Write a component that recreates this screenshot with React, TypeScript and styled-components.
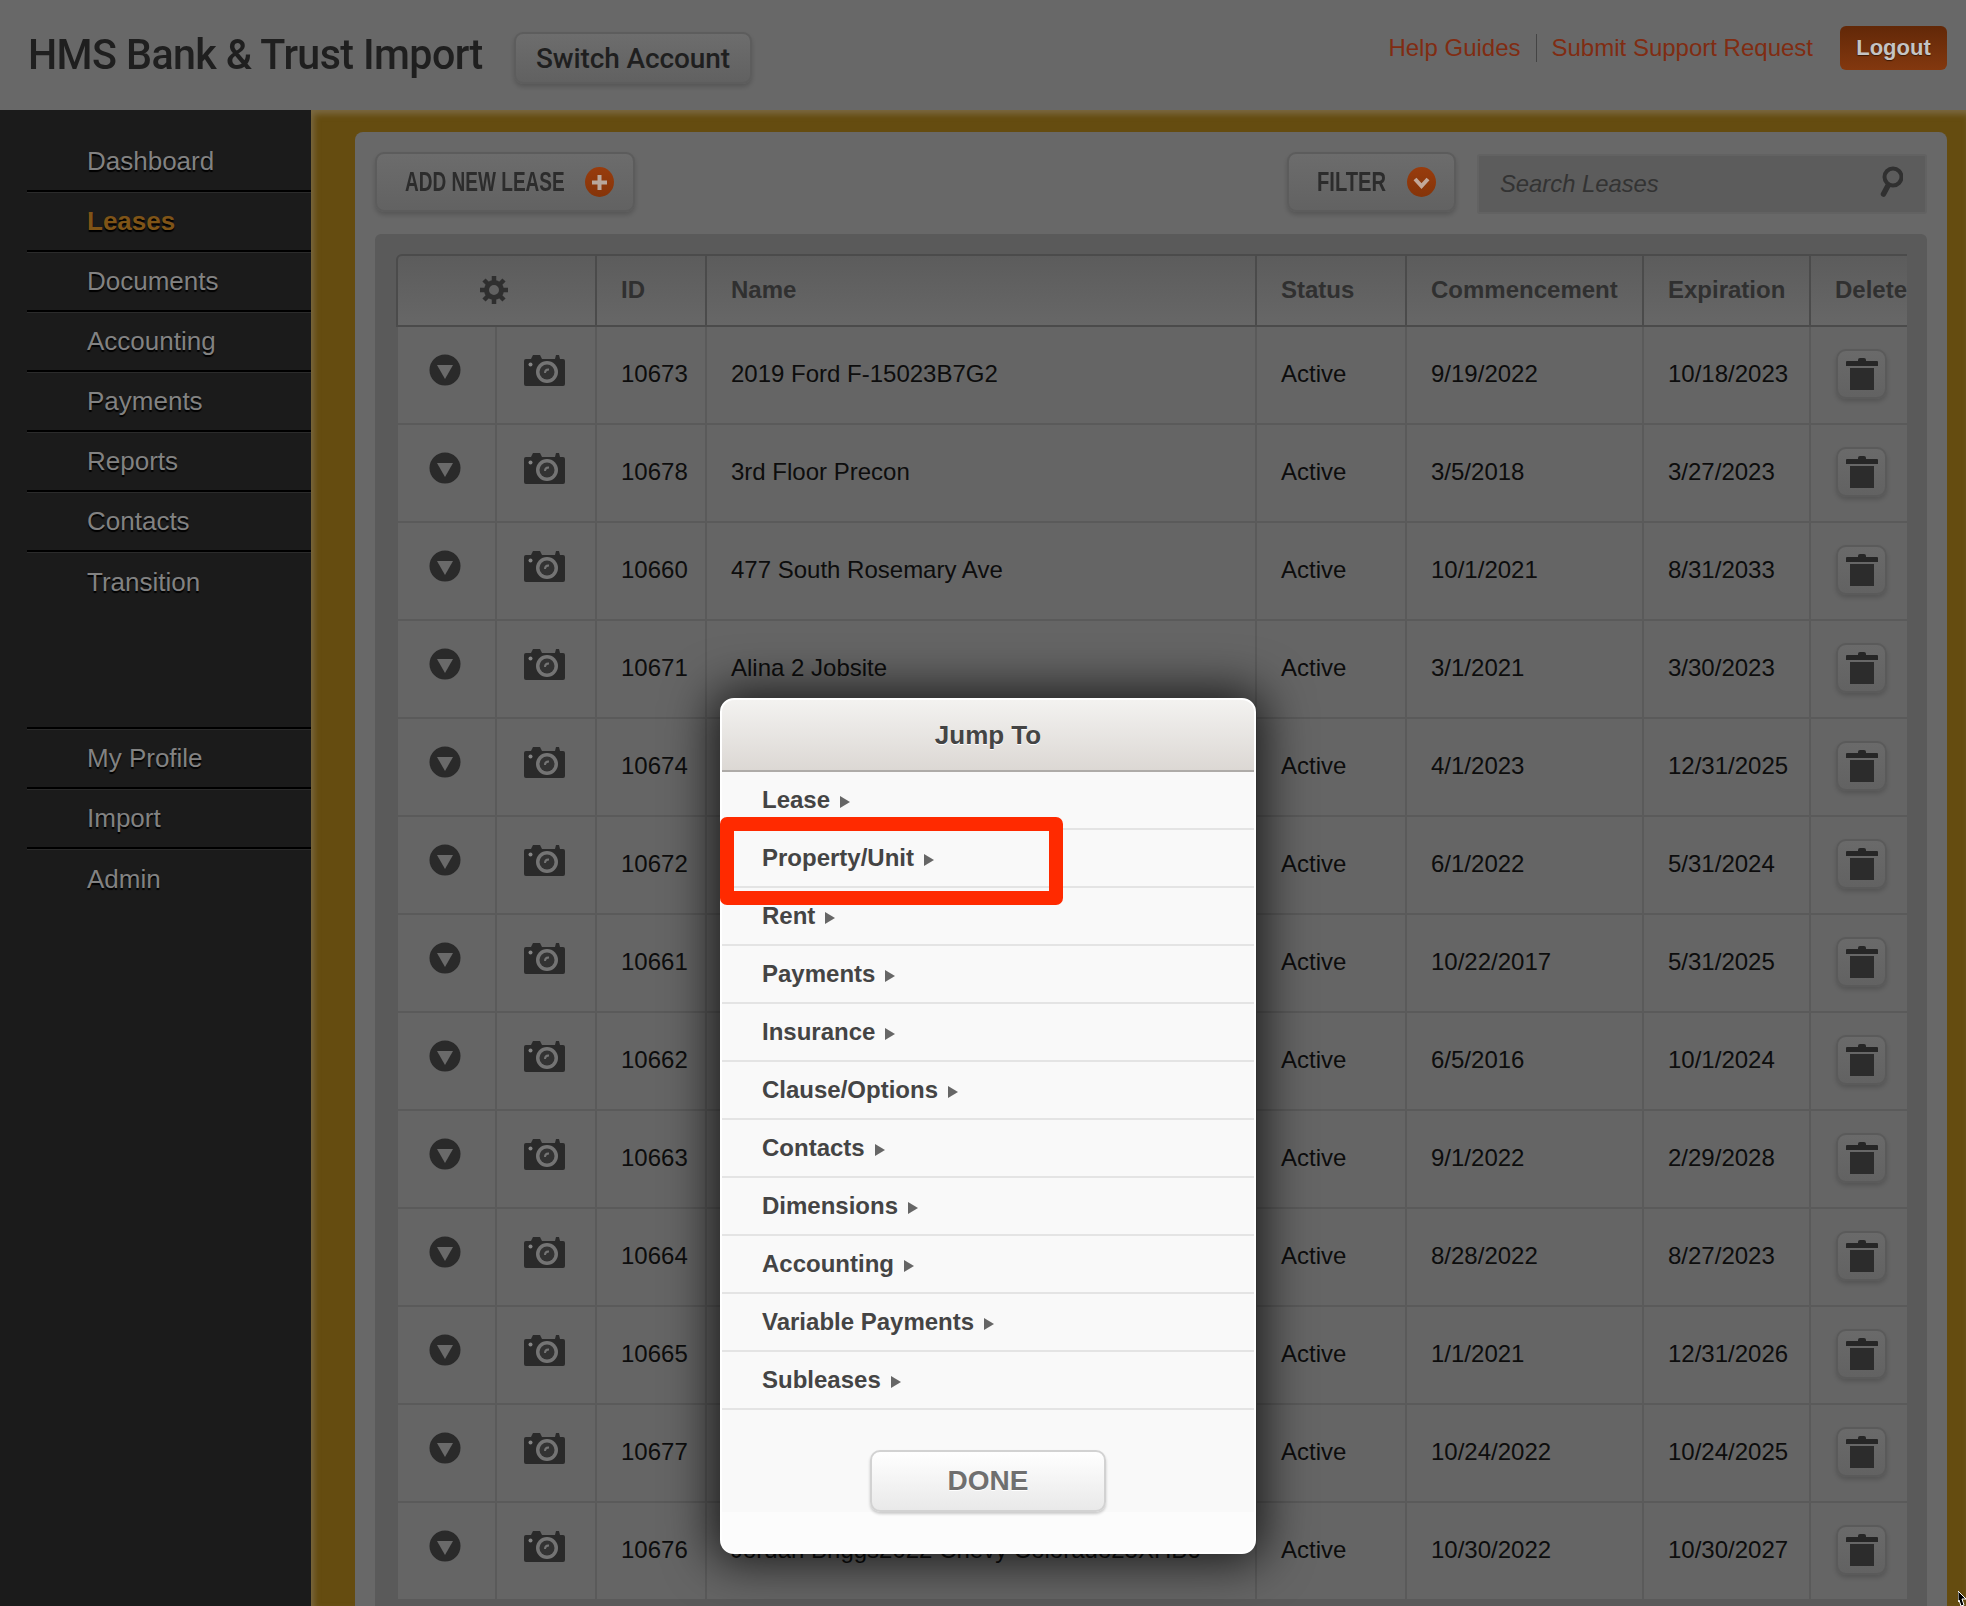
import React from 'react';
import styled, { createGlobalStyle } from 'styled-components';

const GlobalStyle = createGlobalStyle`
    html, body {
        margin: 0;
        padding: 0;
        background: #6a6a6a;
        font-family: "Liberation Sans", Arial, sans-serif;
    }
    * {
        box-sizing: border-box;
    }
`;

const Page = styled.div`
    position: relative;
    width: 1966px;
    height: 1606px;
    overflow: hidden;
    display: flex;
    flex-direction: column;
`;

const Header = styled.header`
    flex: 0 0 110px;
    display: flex;
    align-items: flex-start;
    background: #686868;
    padding-left: 28px;
    padding-right: 19px;
`;
const Title = styled.h1`
    margin: 25px 0 0;
    width: 486px;
    font-family: "Roboto", sans-serif;
    font-size: 42px;
    line-height: 60px;
    font-weight: 500;
    color: #1f1f1f;
    white-space: nowrap;
    letter-spacing: -0.6px;
    transform: scaleX(0.98);
    transform-origin: left center;
`;
const SwitchButton = styled.button`
    margin-top: 32px;
    width: 238px;
    height: 52px;
    padding: 0;
    border: 2px solid #5d5d5d;
    border-radius: 9px;
    background: linear-gradient(#6d6d6d, #616161);
    box-shadow: 0 3px 4px rgba(0, 0, 0, 0.16);
    font-family: "Roboto", sans-serif;
    font-size: 28px;
    font-weight: 500;
    letter-spacing: -0.1px;
    color: #1f1f1f;
`;
const HeaderRight = styled.div`
    margin-left: auto;
    margin-top: 26px;
    display: flex;
    align-items: flex-start;
`;
const HelpLink = styled.a`
    font-size: 24px;
    line-height: 44px;
    color: #802c12;
    white-space: nowrap;
`;
const LinkDivider = styled.span`
    width: 1px;
    height: 28px;
    margin: 8px 15px 0 15px;
    background: #444444;
`;
const LogoutButton = styled.button`
    width: 107px;
    height: 44px;
    margin-left: 27px;
    padding: 0;
    border: 0;
    border-radius: 6px;
    background: linear-gradient(#622808, #83380f);
    font-family: "Liberation Sans", Arial, sans-serif;
    font-size: 22px;
    font-weight: bold;
    color: #c4c4c4;
    text-shadow: 0 1px 1px #3c1804;
`;

const Body = styled.div`
    flex: 1;
    min-height: 0;
    display: flex;
`;

const Sidebar = styled.nav`
    flex: 0 0 311px;
    background: #1b1b1b;
    padding: 22px 0 0 27px;
`;
const NavGroup = styled.div<{ $lined?: boolean }>`
    margin-top: ${(props) => (props.$lined ? '115px' : '0')};
    border-top: ${(props) => (props.$lined ? '2px solid #000000' : 'none')};
    box-shadow: ${(props) => (props.$lined ? 'inset 0 1px 0 #2b2b2b' : 'none')};
`;
const NavItem = styled.div<{ $active?: boolean; $last?: boolean }>`
    height: 60px;
    padding-left: 60px;
    display: flex;
    align-items: center;
    font-size: 26px;
    font-weight: ${(props) => (props.$active ? 'bold' : 'normal')};
    color: ${(props) => (props.$active ? '#7f5417' : '#828282')};
    text-shadow: 0 2px 1px #000000;
    border-bottom: ${(props) => (props.$last ? 'none' : '2px solid #000000')};
    box-shadow: ${(props) => (props.$last ? 'none' : '0 1px 0 #2b2b2b')};
`;

const Main = styled.main`
    flex: 1;
    min-width: 0;
    background: #654c10;
    box-shadow: inset 3px 4px 6px rgba(140, 130, 110, 0.55);
    padding: 22px 19px 0 44px;
`;
const Panel = styled.section`
    height: 100%;
    background: #686868;
    border-radius: 8px 8px 0 0;
    padding: 20px 20px 0 20px;
`;
const Toolbar = styled.div`
    display: flex;
    align-items: flex-start;
    justify-content: space-between;
    height: 60px;
    margin-bottom: 22px;
`;
const ToolGroup = styled.div`
    display: flex;
    align-items: flex-start;
`;
const ToolButton = styled.button<{ $width: number; $gap: number }>`
    width: ${(props) => props.$width}px;
    height: 60px;
    padding: 0 0 0 28px;
    border: 2px solid #5c5c5c;
    border-radius: 9px;
    background: linear-gradient(#6c6c6c, #626262);
    box-shadow: 0 3px 4px rgba(0, 0, 0, 0.16);
    display: flex;
    align-items: center;
    gap: ${(props) => props.$gap}px;
`;
const ToolLabel = styled.span<{ $width: number; $squeeze: number }>`
    display: inline-block;
    width: ${(props) => props.$width}px;
    font-family: "Liberation Sans", sans-serif;
    font-size: 28px;
    font-weight: bold;
    text-align: left;
    white-space: nowrap;
    color: #2c2c2c;
    transform: scaleX(${(props) => props.$squeeze});
    transform-origin: left center;
`;
const OrangeDot = styled.span`
    width: 29px;
    height: 30px;
    border-radius: 50%;
    background: linear-gradient(#983c0d, #853409);
    display: flex;
    align-items: center;
    justify-content: center;
    flex-shrink: 0;
`;
const SearchBox = styled.div`
    margin-left: 21px;
    margin-top: 2px;
    width: 450px;
    height: 60px;
    background: #5c5c5c;
    border: 2px solid #626262;
    border-radius: 3px;
    display: flex;
    align-items: center;
    justify-content: space-between;
    padding: 0 22px 0 21px;
`;
const SearchPlaceholder = styled.span`
    font-size: 23.8px;
    font-style: italic;
    color: #333333;
`;
const SearchGlass = styled.svg`
    margin-bottom: 4px;
    filter: blur(0.5px);
`;

const TableWell = styled.div`
    height: 100%;
    background: #5a5a5a;
    border-radius: 6px 6px 0 0;
    padding: 20px 20px 0 21px;
`;
const TableClip = styled.div`
    width: 1511px;
    overflow: hidden;
`;
const LeaseTable = styled.table`
    width: 1537px;
    table-layout: fixed;
    border-collapse: separate;
    border-spacing: 0;
`;
const HeadCell = styled.th<{ $first?: boolean; $center?: boolean }>`
    height: 73px;
    padding: 0 0 2px ${(props) => (props.$center ? '0' : '24px')};
    text-align: ${(props) => (props.$center ? 'center' : 'left')};
    font-size: 24px;
    font-weight: bold;
    color: #303030;
    white-space: nowrap;
    background: linear-gradient(#5c5c5c, #676767);
    border-top: 2px solid #4b4b4b;
    border-bottom: 2px solid #4b4b4b;
    border-right: 2px solid #4b4b4b;
    border-left: ${(props) => (props.$first ? '2px solid #4b4b4b' : 'none')};
    border-top-left-radius: ${(props) => (props.$first ? '6px' : '0')};
`;
const Gear = styled.svg`
    display: inline-block;
    vertical-align: middle;
    margin-right: 5px;
    filter: blur(0.5px);
`;
const Cell = styled.td<{ $first?: boolean; $center?: boolean }>`
    height: 98px;
    padding: 0 0 2px ${(props) => (props.$center ? '0' : '24px')};
    text-align: ${(props) => (props.$center ? 'center' : 'left')};
    font-size: 24px;
    color: #0d0d0d;
    white-space: nowrap;
    background: #656565;
    border-bottom: 2px solid #5a5a5a;
    border-right: 2px solid #5a5a5a;
    border-left: ${(props) => (props.$first ? '2px solid #5a5a5a' : 'none')};
`;
const IconWrap = styled.div`
    display: flex;
    justify-content: center;
    align-items: center;
    margin-top: -8px;
    padding-right: 4px;
`;
const DeleteCell = styled(Cell)`
    padding: 0 0 2px 0;
`;
const DeleteButton = styled.div`
    width: 51px;
    height: 50px;
    margin-left: 25px;
    border: 2px solid #5a5a5a;
    border-radius: 10px;
    background: linear-gradient(#6a6a6a, #626262);
    box-shadow: 0 3px 4px rgba(0, 0, 0, 0.15);
    display: flex;
    align-items: center;
    justify-content: center;
`;

const Modal = styled.div`
    position: absolute;
    left: 720px;
    top: 698px;
    width: 536px;
    height: 856px;
    background: #fcfcfc;
    border: 2px solid #ffffff;
    border-radius: 14px;
    box-shadow: 0 0 48px 8px rgba(0, 0, 0, 0.74);
    display: flex;
    flex-direction: column;
`;
const ModalHeader = styled.div`
    flex: 0 0 72px;
    border-radius: 12px 12px 0 0;
    background: linear-gradient(#f3f2f0, #dcd8d4);
    border-bottom: 2px solid #aeaba8;
    display: flex;
    align-items: center;
    justify-content: center;
    font-size: 26px;
    font-weight: bold;
    color: #444444;
    text-shadow: 0 1px 0 #ffffff;
`;
const ModalList = styled.div`
    background: #f9f9f9;
`;
const ModalRow = styled.div`
    height: 58px;
    border-bottom: 2px solid #e4e4e4;
    padding: 0 0 1px 40px;
    display: flex;
    align-items: center;
    font-size: 24px;
    font-weight: bold;
    color: #444444;
`;
const RowArrow = styled.span`
    width: 0;
    height: 0;
    margin: 4px 0 0 10px;
    border-left: 10px solid #666666;
    border-top: 6.5px solid transparent;
    border-bottom: 6.5px solid transparent;
`;
const ModalFooter = styled.div`
    flex: 1;
    display: flex;
    justify-content: center;
    padding-top: 40px;
    background: linear-gradient(#f9f9f9 102px, #fcfcfc 102px);
    border-radius: 0 0 12px 12px;
`;
const DoneButton = styled.button`
    width: 236px;
    height: 62px;
    padding: 0;
    border: 2px solid #d2d2d2;
    border-radius: 10px;
    background: linear-gradient(#ffffff, #e9e9e9);
    box-shadow: 0 2px 3px rgba(0, 0, 0, 0.2);
    font-family: "Liberation Sans", Arial, sans-serif;
    font-size: 28px;
    font-weight: bold;
    color: #6f6f6f;
    text-shadow: 0 1px 0 #ffffff;
`;

// red box somebody drew on the screenshot
const Callout = styled.div`
    position: absolute;
    left: 720px;
    top: 817px;
    width: 343px;
    height: 88px;
    border: 14px solid #ff2a00;
    border-radius: 7px;
    pointer-events: none;
`;
const Cursor = styled.svg`
    position: absolute;
    left: 1958px;
    top: 1591px;
`;

function TriangleIcon() {
    return (
        <svg width="32" height="32" viewBox="0 0 32 32">
            <circle cx="16" cy="16" r="15.5" fill="#2a2a2a" />
            <path d="M8 11 H24 L16 25 Z" fill="#6a6a6a" />
        </svg>
    );
}

function CameraIcon() {
    return (
        <svg width="41" height="32" viewBox="0 0 41 32">
            <path
                d="M2 5 H7 L9 1 H16 L18 5 H31 L32 1 H35 L36 5 H39 Q41 5 41 7 V30 Q41 32 39 32 H2 Q0 32 0 30 V7 Q0 5 2 5 Z"
                fill="#2a2a2a"
            />
            <circle cx="23" cy="18" r="11" fill="#747474" />
            <circle cx="23" cy="18" r="7.5" fill="#333333" />
            <path d="M20 19 Q20 14 25 14.5 L25 16.5 Q22 16.5 22 19 Z" fill="#747474" />
            <circle cx="6.5" cy="10.5" r="2" fill="#858585" />
        </svg>
    );
}

function TrashIcon() {
    return (
        <svg width="32" height="34" viewBox="0 0 32 34">
            <path d="M12 3 Q12 1 14 1 H18 Q20 1 20 3 V4 H31 Q32 4 32 5 V9 H0 V5 Q0 4 1 4 H12 Z" fill="#262626" />
            <path d="M4 11 H28 V33 H4 Z" fill="#2c2c2c" />
        </svg>
    );
}

function GearIcon() {
    return (
        <Gear width="30" height="30" viewBox="0 0 30 30">
            <g stroke="#2f2f2f" strokeWidth="4.5">
                <path d="M15 1 V29 M1 15 H29 M5 5 L25 25 M25 5 L5 25" />
            </g>
            <circle cx="15" cy="15" r="7.5" fill="#616161" stroke="#2f2f2f" strokeWidth="5" />
        </Gear>
    );
}

function SearchIcon() {
    return (
        <SearchGlass width="24" height="32" viewBox="0 0 24 32">
            <circle cx="14" cy="11" r="8.5" fill="#5c5c5c" stroke="#303030" strokeWidth="4" />
            <path d="M8.5 20.5 L4.5 28" stroke="#303030" strokeWidth="5.5" strokeLinecap="round" />
        </SearchGlass>
    );
}

const leases = [
    { id: '10673', name: '2019 Ford F-15023B7G2', start: '9/19/2022', end: '10/18/2023' },
    { id: '10678', name: '3rd Floor Precon', start: '3/5/2018', end: '3/27/2023' },
    { id: '10660', name: '477 South Rosemary Ave', start: '10/1/2021', end: '8/31/2033' },
    { id: '10671', name: 'Alina 2 Jobsite', start: '3/1/2021', end: '3/30/2023' },
    { id: '10674', name: '', start: '4/1/2023', end: '12/31/2025' },
    { id: '10672', name: '', start: '6/1/2022', end: '5/31/2024' },
    { id: '10661', name: '', start: '10/22/2017', end: '5/31/2025' },
    { id: '10662', name: '', start: '6/5/2016', end: '10/1/2024' },
    { id: '10663', name: '', start: '9/1/2022', end: '2/29/2028' },
    { id: '10664', name: '', start: '8/28/2022', end: '8/27/2023' },
    { id: '10665', name: '', start: '1/1/2021', end: '12/31/2026' },
    { id: '10677', name: '', start: '10/24/2022', end: '10/24/2025' },
    { id: '10676', name: 'Jordan Briggs2022 Chevy Colorado23XHB6', start: '10/30/2022', end: '10/30/2027' },
];

const columns = [101, 100, 110, 550, 150, 237, 167, 122];
const jumpLinks = [
    'Lease',
    'Property/Unit',
    'Rent',
    'Payments',
    'Insurance',
    'Clause/Options',
    'Contacts',
    'Dimensions',
    'Accounting',
    'Variable Payments',
    'Subleases',
];

function App() {
    return (
        <Page>
            <GlobalStyle />
            <Header>
                <Title>HMS Bank &amp; Trust Import</Title>
                <SwitchButton>Switch Account</SwitchButton>
                <HeaderRight>
                    <HelpLink>Help Guides</HelpLink>
                    <LinkDivider />
                    <HelpLink>Submit Support Request</HelpLink>
                    <LogoutButton>Logout</LogoutButton>
                </HeaderRight>
            </Header>
            <Body>
                <Sidebar>
                    <NavGroup>
                        <NavItem>Dashboard</NavItem>
                        <NavItem $active>Leases</NavItem>
                        <NavItem>Documents</NavItem>
                        <NavItem>Accounting</NavItem>
                        <NavItem>Payments</NavItem>
                        <NavItem>Reports</NavItem>
                        <NavItem>Contacts</NavItem>
                        <NavItem $last>Transition</NavItem>
                    </NavGroup>
                    <NavGroup $lined>
                        <NavItem>My Profile</NavItem>
                        <NavItem>Import</NavItem>
                        <NavItem $last>Admin</NavItem>
                    </NavGroup>
                </Sidebar>
                <Main>
                    <Panel>
                        <Toolbar>
                            <ToolButton $width={260} $gap={22}>
                                <ToolLabel $width={158} $squeeze={0.68}>ADD NEW LEASE</ToolLabel>
                                <OrangeDot>
                                    <svg width="17" height="17" viewBox="0 0 17 17">
                                        <path d="M6.5 1 H10.5 V6.5 H16 V10.5 H10.5 V16 H6.5 V10.5 H1 V6.5 H6.5 Z" fill="#b8a79c" />
                                    </svg>
                                </OrangeDot>
                            </ToolButton>
                            <ToolGroup>
                                <ToolButton $width={169} $gap={21}>
                                    <ToolLabel $width={69} $squeeze={0.72}>FILTER</ToolLabel>
                                    <OrangeDot>
                                        <svg width="17" height="15" viewBox="0 0 17 15">
                                            <path d="M2 4 L8.5 11 L15 4" fill="none" stroke="#c2a89a" strokeWidth="4" />
                                        </svg>
                                    </OrangeDot>
                                </ToolButton>
                                <SearchBox>
                                    <SearchPlaceholder>Search Leases</SearchPlaceholder>
                                    <SearchIcon />
                                </SearchBox>
                            </ToolGroup>
                        </Toolbar>
                        <TableWell>
                            <TableClip>
                                <LeaseTable>
                                    <colgroup>
                                        {columns.map((width, index) => (
                                            <col key={index} style={{ width }} />
                                        ))}
                                    </colgroup>
                                    <thead>
                                        <tr>
                                            <HeadCell $first $center colSpan={2}>
                                                <GearIcon />
                                            </HeadCell>
                                            <HeadCell>ID</HeadCell>
                                            <HeadCell>Name</HeadCell>
                                            <HeadCell>Status</HeadCell>
                                            <HeadCell>Commencement</HeadCell>
                                            <HeadCell>Expiration</HeadCell>
                                            <HeadCell>Delete</HeadCell>
                                        </tr>
                                    </thead>
                                    <tbody>
                                        {leases.map((lease) => (
                                            <tr key={lease.id}>
                                                <Cell $first $center>
                                                    <IconWrap>
                                                        <TriangleIcon />
                                                    </IconWrap>
                                                </Cell>
                                                <Cell $center>
                                                    <IconWrap>
                                                        <CameraIcon />
                                                    </IconWrap>
                                                </Cell>
                                                <Cell>{lease.id}</Cell>
                                                <Cell>{lease.name}</Cell>
                                                <Cell>Active</Cell>
                                                <Cell>{lease.start}</Cell>
                                                <Cell>{lease.end}</Cell>
                                                <DeleteCell>
                                                    <DeleteButton>
                                                        <TrashIcon />
                                                    </DeleteButton>
                                                </DeleteCell>
                                            </tr>
                                        ))}
                                    </tbody>
                                </LeaseTable>
                            </TableClip>
                        </TableWell>
                    </Panel>
                </Main>
            </Body>
            <Modal>
                <ModalHeader>Jump To</ModalHeader>
                <ModalList>
                    {jumpLinks.map((label) => (
                        <ModalRow key={label}>
                            {label}
                            <RowArrow />
                        </ModalRow>
                    ))}
                </ModalList>
                <ModalFooter>
                    <DoneButton>DONE</DoneButton>
                </ModalFooter>
            </Modal>
            <Callout />
            <Cursor width="8" height="15" viewBox="0 0 8 15">
                <path d="M0 0 L8 8 L4 8 L6 14 L3 15 L1 9 L0 11 Z" fill="#000000" stroke="#ffffff" strokeWidth="1" />
            </Cursor>
        </Page>
    );
}

export default App;
